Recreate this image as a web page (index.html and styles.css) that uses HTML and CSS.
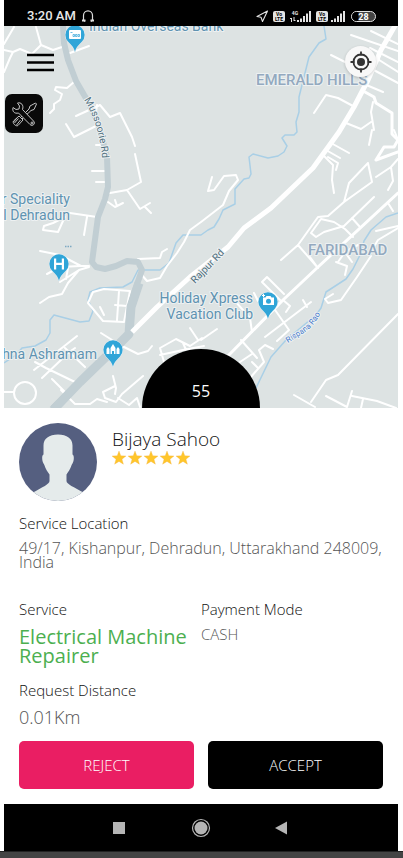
FILE: index.html
```html
<!DOCTYPE html>
<html lang="en">
<head>
<meta charset="utf-8">
<meta name="viewport" content="width=device-width, initial-scale=1">
<title>Service request</title>
<link rel="stylesheet" href="styles.css">
</head>
<body>
<div class="phone">
  <header class="status">
    <span class="clock">3:20 AM</span>
    <svg class="headphones" width="14" height="14" viewBox="0 0 14 14" aria-hidden="true"><path d="M4 12.500 2.500 11V6.500a4.500 4.700 0 0 1 9 0V11L10 12.500" fill="none" stroke="#ddd" stroke-width="1.200"/><path d="M1 11.500h3.500M9.500 11.500H13" stroke="#ddd" stroke-width="1.800"/></svg>
    <svg class="indicators" width="122" height="16" viewBox="255 7 122 16" role="img" aria-label="Location, two mobile networks, battery 28">
      <path d="M267.500 10 257 15.500l4 .8 1.500 4.200z" fill="none" stroke="#e4e4e4" stroke-width="1.100" stroke-linejoin="round"/>
      <g fill="#e4e4e4">
        <rect x="273" y="10" width="12" height="11" rx="2"/><rect x="316" y="10" width="12" height="11" rx="2"/>
        <path d="M297 19h2v2h-2zM300 17.500h2V21h-2zM303 15h2v6h-2zM306 12.500h2V21h-2zM309 10h2v11h-2z"/>
        <path d="M331 19h2v2h-2zM334 17.500h2V21h-2zM337 15h2v6h-2zM340 12.500h2V21h-2zM343 10h2v11h-2z"/>
        <path d="M290 17h1v1h-1zM291 17h1v4h-1zM293.500 16h1v4h-1zM294.500 19h1v1h-1z"/>
      </g>
      <g class="net"><text x="279" y="15.200">Vo</text><text x="279" y="20.400">LTE</text><text x="322" y="15.200">Vo</text><text x="322" y="20.400">LTE</text></g>
      <text class="gen" x="295" y="14">4G</text>
      <rect x="351.500" y="10.500" width="24" height="10" rx="5" fill="#444" stroke="#e4e4e4"/>
      <path d="M356.500 11h2v9h-2a4.500 4.500 0 0 1 0-9z" fill="#000"/>
      <text class="battery" x="363.500" y="18.800">28</text>
    </svg>
  </header>

  <main class="screen">
    <section class="map" aria-label="Map">
      <svg class="map-art" viewBox="4 26 394 382" preserveAspectRatio="xMidYMid slice">
        <defs>
          <path id="mussoorie" d="M84 100C91 110 96 124 99 138S102 152 102 162"/>
          <path id="rispana" d="M288 343C302 333 314 331 322 309"/>
          <path id="pin" d="M0 0C-1-5-3-6-7-10.500a9.600 9.600 0 1 1 14 0C3-6 1-5 0 0z"/>
        </defs>
        <g class="river">
          <path d="M324 26 326 39 319 43 309 57 305 73 299 97V112L296 122 297 132 294 135H285L282 138 287 146 284 152 278 156 268 158 253 154 249 157 251 174 249 178 244 179 235 189V204L223 210 219 219 214 227 208 230 201 235H183L176 243 169 263 160 270 138 270 132 282 123 287 100 288 90 292 88 300 93 311 89 321 80 322 54 315 50 320V333L46 340 35 346 22 348 16 355 4 363"/>
          <path d="M398 213 386 217 371 230 364 241 361 253 353 269 346 279 326 292 321 308 316 315 286 340 271 357 256 388"/>
        </g>
        <g class="street">
          <path d="M4 50 13 52 20 49 32 54 41 45 53 50 62 47M41 45 36 27M4 72 10 58 13 52M14 27 4 44"/>
          <path d="M70 53 89 46M74 82 67 88 56 87 55 90 62 94 60 100 54 104 54 109 50 113"/>
          <path d="M76 116 100 105 110 117 120 113 132 137 135 146M97 105 96 112M66 124 74 137 96 126M135 154 141 182 127 190 110 193M127 190 140 209 150 203M145 207 151 213M108 202 115 207 123 203M117 206 115 200M92 171H105M96 182H106M96 145H103"/>
          <path d="M97 217 70 213M87 217 84 235M65 217 53 223 44 226 43 230 58 232 63 221M40 251 60 255 81 266 89 266M89 267 79 270 68 283 62 294 49 297 40 303M47 274 60 267 80 266M60 282 79 270M66 279 68 268"/>
          <path d="M138 259 160 258 162 252 167 249M201 222 190 230 184 242 177 253 167 266 160 278 147 281 141 274M201 222 223 205 229 191 238 180 236 175 224 176 214 190 208 191 212 177"/>
          <path d="M88 303 93 292 104 289 130 291 124 322 103 321ZM119 291 117 320M115 305 127 306M100 307 104 315M101 333 120 345 138 354 148 351 152 346"/>
          <circle cx="25" cy="393" r="11"/>
          <path d="M4 392H14M77 336 34 370M42 378 62 359M35 362 46 368 75 382M52 379 66 393M65 348 85 367M61 358 75 348M61 390 75 404 90 404 97 399 107 402M115 386 103 392 105 398 116 402 122 394 143 376M113 376 116 388 115 394M118 398 129 405 137 398 140 407"/>
          <path d="M164 362 160 348 176 339 190 346 202 338M190 328 198 340M160 355 183 350 204 346M183 343 187 352M201 340 217 329"/>
          <path d="M298 245 318 268M281 260 298 245 318 217 328 216 344 202 349 183 368 163M344 202 372 182 368 163M374 197 344 226 324 232 316 237 311 233 321 219 334 222 345 229 353 237M352 218 360 227M388 203 393 211M376 177 391 167 398 159M388 190 393 181 391 167M372 130 369 145M331 143 349 153M326 150 340 158M324 156 333 165 332 180 334 193M328 157 338 163 336 170M394 130 398 140M310 257 318 268"/>
          <path d="M371 31 398 44M351 35 398 51M331 55 347 63M370 48 398 62M376 58 398 72M370 68 398 83M364 84 383 92M314 113 326 95 338 98 353 106M373 102 371 112 374 130M346 123 361 129 371 122"/>
          <path d="M280 300 262 282 267 277 284 294M254 293 258 301M283 300 290 306 286 312M273 307 289 330 277 341M265 337 311 302M303 300 307 307M235 301 250 318 252 332M241 340 257 358M240 362 252 354M250 378 264 362 259 350 265 345 273 349M252 362 258 368"/>
          <path d="M371 256 357 277 341 300 328 303 325 299 333 294M398 226 376 231M398 228 378 240 369 255M338 262 345 252 358 245M345 252 352 262M336 262 347 266 345 275M398 314 338 375 326 380 311 402M294 395 315 407M326 396 347 407 352 391M352 396 377 401 396 408M363 399 361 408"/>
        </g>
        <g class="street wide">
          <path d="M226 358 283 300 318 267 398 193M365 92 374 97 376 103 392 113V134L398 140 394 147 384 147 376 160M376 160 398 152"/>
        </g>
        <path class="artery" d="M63 26 64 43 68 60 76 81 87 100 98 123 107 157 108 187 105 199 98 217 94 247 92 262 96 267 105 269 116 266 127 261 138 262 142 270 135 290 130 307 128 335 115 347 80 382 53 408"/>
        <path class="artery thick" d="M139 283 131 307 129 334 114 349 80 382 53 410"/>
        <path class="highway" d="M132 332 157 307 190 277 228 247 244 228 271 208 313 168 339 132 354 107 368 80 381 50 396 24"/>

        <g class="place">
          <text x="89" y="31">Indian Overseas Bank</text>
          <text x="70" y="204" text-anchor="end">r Speciality</text>
          <text x="70" y="220" text-anchor="end">l Dehradun</text>
          <text x="253" y="303" text-anchor="end">Holiday Xpress</text>
          <text x="253" y="319" text-anchor="end">Vacation Club</text>
          <text x="97" y="359" text-anchor="end">hna Ashramam</text>
        </g>
        <g class="area">
          <text x="256" y="85">EMERALD HILLS</text>
          <text x="308" y="255">FARIDABAD</text>
        </g>
        <text class="road-name"><textPath href="#mussoorie">Mussoorie Rd</textPath></text>
        <text class="road-name" transform="translate(195 284) rotate(-46)">Rajpur Rd</text>
        <text class="river-name"><textPath href="#rispana">Rispana Rao</textPath></text>
        <path d="M65 246.500h7" stroke="#7da9c2" stroke-width="1.500" stroke-dasharray="1.500 1"/>

        <g class="pins">
          <use href="#pin" x="75" y="52"/><use href="#pin" x="59" y="281"/><use href="#pin" x="268" y="319"/><use href="#pin" x="113" y="367"/>
        </g>
        <g fill="#fff">
          <rect x="69" y="30" width="12" height="9" rx="1"/>
          <path d="M54 258.500h2.200v4.200h5.600v-4.200H64v11h-2.200v-4.600h-5.600v4.600H54z"/>
          <path d="M263 297.500h2.500l1-1.500h4l1 1.500h2.500v7.500h-11z"/>
          <path d="M106.500 354v-5l1.500-2 1.500 2v5zM110.500 354v-6l2.500-4 2.500 4v6h-1.500v-3h-2v3zM116.500 354v-5l1.500-2 1.500 2v5z"/>
          <path d="M262 295.500h3M263.500 294v3" stroke="#fff"/>
        </g>
        <path d="M70.500 32.500h2M73 36.500h1.500v-2H73zM75.500 36.500H77v-2h-1.500zM78 36.500h1.500v-2H78z" fill="none" stroke="#30a5d8" stroke-width=".7"/>
        <circle cx="268.500" cy="301.300" r="2.500" fill="#30a5d8"/>
      </svg>

      <button class="icon-btn menu" aria-label="Menu"><svg width="27" height="19" viewBox="0 0 27 19"><path d="M0 2h27M0 9.500h27M0 17h27" stroke="#000" stroke-width="2.600"/></svg></button>
      <button class="icon-btn tools" aria-label="Tools">
        <svg width="28" height="28" viewBox="0 0 28 28" fill="#090909" stroke="#c4c4c4" stroke-width="1" stroke-linejoin="round">
          <path d="M25.500 3 20 6 19 9 10 18l1.500 1.500L21 10.500l3-1 2.500-5.500z"/>
          <path d="M9 16 13 20 8 25.500c-2 1.500-6-2.500-4.500-4.500zM8.500 18.500 4.500 23M10.500 20 6.500 25M7 18 3.500 22"/>
          <path d="M7.500 3 9.500 6 9 9 6 9.500 3 7.500C2 11.500 4.500 14 8.500 13L20 24.500c2.500 2.500 6-1 3.500-3.500L12.500 9.500C14 5 11 2 7.500 3z"/>
          <circle cx="22" cy="23" r="1"/>
        </svg>
      </button>
      <button class="icon-btn locate" aria-label="My location"><svg width="22" height="22" viewBox="0 0 22 22"><circle cx="11" cy="11" r="7.500" fill="none" stroke="#333" stroke-width="1.800"/><circle cx="11" cy="11" r="4" fill="#333"/><path d="M11 .5v4M11 17.500v4M.5 11h4M17.500 11h4" stroke="#333" stroke-width="1.800"/></svg></button>
      <div class="countdown">55</div>
    </section>

    <section class="request">
      <div class="customer">
        <svg class="avatar" viewBox="0 0 78 78" role="img" aria-label="Customer photo">
          <defs><clipPath id="face"><circle cx="39" cy="39" r="39"/></clipPath></defs>
          <g clip-path="url(#face)"><path d="M0 0h78v78H0z" fill="#555f80"/><path d="M39 11.500c9 0 14.500 4 14.500 11v9c2 1 1.500 6 0 9-1 1-1.500 5-6 11v6.500c0 3 7 6 18 12V80H13V70c11-6 17.500-9 17.500-12v-6.500c-4.500-6-5-10-6-11-1.500-3-2-8 0-9v-9c0-7 5.500-11 14.500-11z" fill="#e5ebeb"/></g>
        </svg>
        <div class="who">
          <h1>Bijaya Sahoo</h1>
          <svg class="stars" width="80" height="14" viewBox="0 0 80 14" role="img" aria-label="5 stars">
            <defs><path id="star" d="m7 0 1.800 4.800 5.200.2-4 3.200 1.400 5L7 10.400l-4.400 2.800L4 8.200 0 5l5.200-.2z"/></defs>
            <g fill="#ffc62b" stroke="#f3b04c" stroke-width=".3"><use href="#star"/><use href="#star" x="16"/><use href="#star" x="32"/><use href="#star" x="48"/><use href="#star" x="64"/></g>
          </svg>
        </div>
      </div>
      <dl class="details">
        <div class="field full address"><dt>Service Location</dt><dd>49/17, Kishanpur, Dehradun, Uttarakhand 248009, India</dd></div>
        <div class="field service"><dt>Service</dt><dd>Electrical Machine Repairer</dd></div>
        <div class="field"><dt>Payment Mode</dt><dd>CASH</dd></div>
        <div class="field full distance"><dt>Request Distance</dt><dd>0.01Km</dd></div>
      </dl>
      <div class="actions"><button class="reject">REJECT</button><button class="accept">ACCEPT</button></div>
    </section>
  </main>

  <nav class="system-nav" aria-label="System">
    <button aria-label="Recent apps"><svg width="20" height="20" viewBox="0 0 20 20"><path d="M4 4h12v12H4z" fill="#b5b5b5"/></svg></button>
    <button aria-label="Home"><svg width="20" height="20" viewBox="0 0 20 20"><circle cx="10" cy="10" r="8.500" fill="none" stroke="#b5b5b5" stroke-width="1.200"/><circle cx="10" cy="10" r="6.500" fill="#b5b5b5"/></svg></button>
    <button aria-label="Back"><svg width="20" height="20" viewBox="0 0 20 20"><path d="M2 10 14 3.500v13z" fill="#b5b5b5"/></svg></button>
  </nav>
</div>
<div class="edge"></div>
</body>
</html>
```
FILE: styles.css
```css
* { box-sizing: border-box; }
body {
  margin: 0;
  min-height: 100vh;
  display: flex;
  flex-direction: column;
  background: #fff;
  color: #111;
  font-family: "Open Sans", "Noto Sans", sans-serif;
  font-weight: 300;
}
button { border: 0; padding: 0; font: inherit; cursor: pointer; }
svg { display: block; }

.phone { flex: 1; display: flex; flex-direction: column; margin: 0 5px 0 4px; }
.status {
  height: 26px;
  flex: none;
  display: flex;
  align-items: center;
  gap: 5px;
  padding: 5px 21px 0 23px;
  background: #000;
  color: #e8e8e8;
}
.clock { font: 500 13px/16px Roboto, sans-serif; }
.indicators { margin-left: auto; }
.net { font: 700 5px Roboto, sans-serif; fill: #000; text-anchor: middle; }
.gen { font: 700 5px Roboto, sans-serif; fill: #e4e4e4; text-anchor: middle; }
.battery { font: 700 9px Roboto, sans-serif; fill: #fff; text-anchor: middle; }

.screen { flex: 1; display: flex; flex-direction: column; }
.map { position: relative; flex: 1; min-height: 300px; overflow: hidden; background: #dde3e3; }
.map-art { position: absolute; inset: 0; width: 100%; height: 100%; }
.river { fill: none; stroke: #a9cfe6; stroke-width: 1.5; stroke-linejoin: round; }
.street { fill: none; stroke: #fff; stroke-width: 2; stroke-linejoin: round; stroke-linecap: round; }
.wide { stroke-width: 3; }
.highway { fill: none; stroke: #fff; stroke-width: 5; stroke-linejoin: round; }
.artery { fill: none; stroke: #c1ced3; stroke-width: 6; stroke-linejoin: round; }
.thick { stroke-width: 9; }
.map-art text { paint-order: stroke; stroke: #edf1f2; stroke-width: 2px; stroke-linejoin: round; }
.place { font: 400 14px Roboto, sans-serif; fill: #5f93b1; }
.area { font: 500 15px Roboto, sans-serif; fill: #93a9bf; }
.road-name { font: 400 10px Roboto, sans-serif; fill: #50707f; }
.river-name { font: 400 8px Roboto, sans-serif; fill: #4478cc; }
.pins { fill: #30a5d8; stroke: #e8f0f3; stroke-width: 1; paint-order: stroke; }

.icon-btn { position: absolute; display: grid; place-items: center; background: none; }
.menu { left: 23px; top: 27px; }
.tools { left: 1px; top: 68px; width: 38px; height: 39px; border-radius: 7px; background: #090909; }
.locate { right: 22px; top: 20px; width: 31px; height: 31px; border-radius: 50%; background: #f8f8f8; box-shadow: 0 1px 3px rgba(0, 0, 0, .2); }
.countdown {
  position: absolute;
  left: 50%;
  bottom: 0;
  width: 118px;
  height: 59px;
  padding-top: 24px;
  transform: translateX(-50%);
  border-radius: 59px 59px 0 0;
  background: #000;
  color: #fff;
  font-size: 16px;
  font-weight: 400;
  line-height: 36px;
  text-align: center;
}

.request { padding: 15px; }
.customer { display: flex; gap: 15px; }
.avatar { width: 78px; height: 78px; flex: none; }
.who { padding-top: 4px; }
h1 { margin: 0; font-size: 19px; line-height: 24px; font-weight: 300; }
.details { display: grid; grid-template-columns: 1fr 1fr; margin: 12px 0 0; }
.field { padding-bottom: 15px; }
.full { grid-column: 1 / -1; }
dt { font-size: 15px; line-height: 20px; }
dd { margin: 8px 0 0; font-size: 15px; line-height: 14px; color: #555; }
.address { padding-bottom: 30px; }
.address dd { font-size: 16px; }
.service dd { font-size: 20px; line-height: 19px; font-weight: 400; color: #4caf50; }
.distance dd { font-size: 18px; line-height: 18px; }
.actions { display: grid; grid-template-columns: 1fr 1fr; gap: 14px; }
.actions button { height: 48px; border-radius: 5px; color: #fff; font-size: 15px; }
.reject { background: #ea1e63; }
.accept { background: #000; }

.system-nav { height: 47px; display: flex; justify-content: center; align-items: center; gap: 62px; background: #000; }
.system-nav button { width: 20px; height: 20px; background: none; }
.edge { height: 7px; border-top: 1px solid #222; background: #444; }
```
